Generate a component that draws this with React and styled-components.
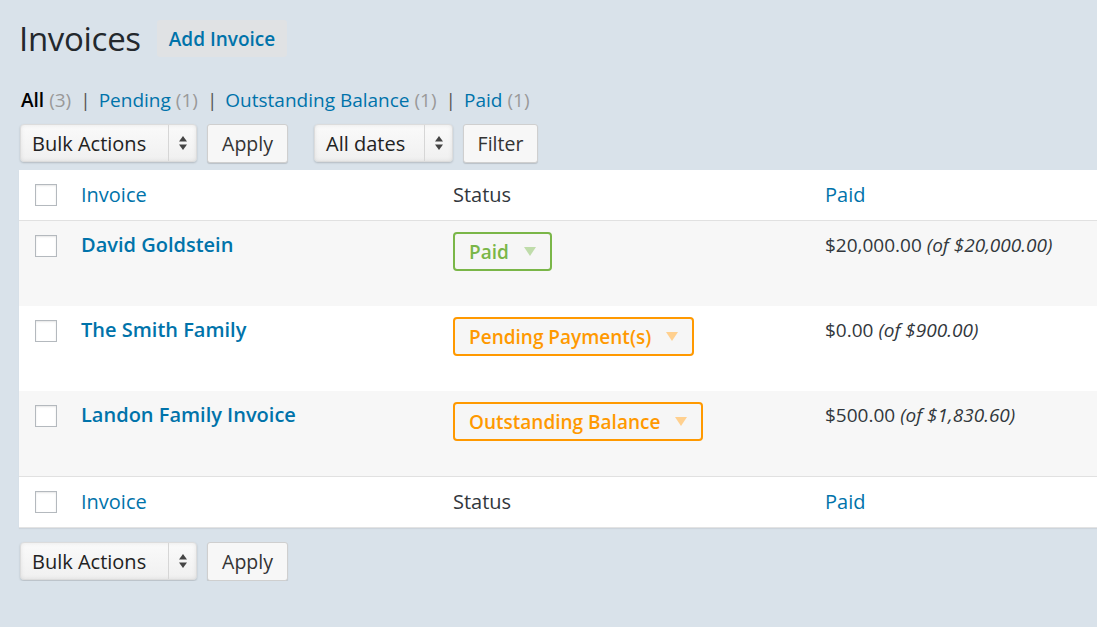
import React from "react";
import styled, { createGlobalStyle } from "styled-components";

const Global = createGlobalStyle`
  html, body { margin: 0; padding: 0; }
  body {
    background: #d9e2ea;
    font-family: "Open Sans", "Noto Sans", sans-serif;
    color: #32373c;
    overflow: hidden;
  }
`;

const Wrap = styled.div`
  padding: 20px 0 0 19px;
  width: 1097px;
  box-sizing: border-box;
`;

const TitleRow = styled.div`
  display: flex;
  align-items: center;
  gap: 16px;
  height: 37px;
`;

const Title = styled.h1`
  margin: 0;
  font-size: 33px;
  font-weight: 400;
  color: #23282d;
  line-height: 37px;
  letter-spacing: -0.3px;
`;

const AddButton = styled.a`
  display: inline-flex;
  align-items: center;
  justify-content: center;
  height: 37px;
  padding: 0 12px;
  background: #e0e2e4;
  color: #0073aa;
  font-size: 19px;
  font-weight: 600;
  border-radius: 3px;
  box-sizing: border-box;
  white-space: nowrap;
`;

const Views = styled.ul`
  list-style: none;
  margin: 31px 0 0 2px;
  padding: 0;
  display: flex;
  font-size: 19px;
  line-height: 24px;
  color: #666;
`;

const ViewItem = styled.li`
  display: flex;
  align-items: baseline;
`;

const ViewLink = styled.a`
  color: ${(p) => (p.$current ? "#000" : "#0073aa")};
  font-weight: ${(p) => (p.$current ? 600 : 400)};
`;

const Count = styled.span`
  color: #999;
  margin-left: 5px;
`;

const Sep = styled.span`
  color: #555;
  margin: 0 8px 0 9px;
`;

const Controls = styled.div`
  display: flex;
  align-items: center;
  margin: ${(p) => p.$top || "8px"} 0 0 1px;
  height: 39px;
`;

const Group = styled.div`
  display: flex;
  gap: 10px;
  margin-right: 26px;
`;

const Select = styled.div`
  display: flex;
  align-items: stretch;
  height: 38px;
  width: ${(p) => p.$w}px;
  box-sizing: border-box;
  border: 1px solid #dcdcdc;
  border-radius: 4px;
  background: linear-gradient(#fafafa, #f0f0f0);
  box-shadow: 0 1px 2px rgba(0, 0, 0, 0.18), inset 0 0 4px rgba(0, 0, 0, 0.08);
  font-size: 20px;
  color: #222;
`;

const SelectText = styled.span`
  flex: 1;
  display: flex;
  align-items: center;
  padding-left: 11px;
`;

const SelectArrow = styled.span`
  width: 27px;
  border-left: 1px solid #d6d6d6;
  display: flex;
  align-items: center;
  justify-content: center;
`;

const Button = styled.button`
  height: 39px;
  width: ${(p) => p.$w}px;
  box-sizing: border-box;
  border: 1px solid #cfcfcf;
  border-radius: 3px;
  background: #f7f7f7;
  box-shadow: 0 1px 1px rgba(0, 0, 0, 0.15);
  font-family: inherit;
  font-size: 19.5px;
  color: #333;
  padding: 0;
  cursor: pointer;
`;

const Table = styled.div`
  margin-top: 7px;
  background: #fff;
  box-shadow: 0 1px 1px rgba(0, 0, 0, 0.06);
  border-bottom: 1px solid #e3e3e3;
  width: 1100px;
`;

const Row = styled.div`
  display: grid;
  grid-template-columns: 50px 372px 372px 1fr;
  height: ${(p) => (p.$head ? 50 : 85)}px;
  align-items: ${(p) => (p.$head ? "center" : "start")};
  background: ${(p) => (p.$alt ? "#f7f7f7" : "#fff")};
  border-bottom: ${(p) => (p.$line ? "1px solid #e1e1e1" : "none")};
  border-top: ${(p) => (p.$topline ? "1px solid #e1e1e1" : "none")};
`;

const Cell = styled.div`
  padding: ${(p) => (p.$head ? "0 0 0 12px" : "9px 0 0 12px")};
  font-size: 20px;
  line-height: 30px;
  color: #32373c;
`;

const CheckCell = styled.div`
  padding: ${(p) => (p.$head ? "0 0 0 16px" : "14px 0 0 16px")};
  display: flex;
`;

const Checkbox = styled.span`
  width: 22px;
  height: 22px;
  box-sizing: border-box;
  border: 1px solid #b4b9be;
  background: #fff;
  box-shadow: inset 0 1px 2px rgba(0, 0, 0, 0.1);
`;

const HeadLink = styled.a`
  color: #0073aa;
`;

const NameLink = styled.a`
  color: #0073aa;
  font-weight: 600;
`;

const StatusCell = styled.div`
  padding: 11px 0 0 12px;
`;

const Badge = styled.span`
  display: inline-flex;
  align-items: center;
  gap: 15px;
  height: 39px;
  box-sizing: border-box;
  padding: 0 14px;
  border: 2px solid ${(p) => p.$c};
  border-radius: 4px;
  background: #f6f6f6;
  color: ${(p) => p.$c};
  font-size: 19px;
  font-weight: 600;
`;

const Of = styled.em`
  font-style: italic;
`;

const Amount = styled.div`
  padding: 9px 0 0 12px;
  font-size: 19px;
  line-height: 30px;
  color: #32373c;
`;

const Updown = () => (
  <svg width="10" height="16" viewBox="0 0 10 16">
    <path d="M1 6.5 L5 1 L9 6.5 Z" fill="#444" />
    <path d="M1 9.5 L5 15 L9 9.5 Z" fill="#444" />
  </svg>
);

const Tri = ({ c }) => (
  <svg width="12" height="9" viewBox="0 0 12 9">
    <path d="M0 0 H12 L6 9 Z" fill={c} />
  </svg>
);

const BulkBar = ({ top, withFilter }) => (
  <Controls $top={top}>
    <Group>
      <Select $w={177}>
        <SelectText>Bulk Actions</SelectText>
        <SelectArrow>
          <Updown />
        </SelectArrow>
      </Select>
      <Button $w={81}>Apply</Button>
    </Group>
    {withFilter && (
      <Group>
        <Select $w={139}>
          <SelectText>All dates</SelectText>
          <SelectArrow>
            <Updown />
          </SelectArrow>
        </Select>
        <Button $w={75}>Filter</Button>
      </Group>
    )}
  </Controls>
);

const rows = [
  { name: "David Goldstein", status: "Paid", color: "#7ab648", tri: "#bfdcaa", paid: "$20,000.00", of: "(of $20,000.00)" },
  { name: "The Smith Family", status: "Pending Payment(s)", color: "#ff9900", tri: "#ffd08f", paid: "$0.00", of: "(of $900.00)" },
  { name: "Landon Family Invoice", status: "Outstanding Balance", color: "#ff9900", tri: "#ffd08f", paid: "$500.00", of: "(of $1,830.60)" },
];

const HeaderRow = ({ bottom }) => (
  <Row $head $line={!bottom} $topline={bottom}>
    <CheckCell $head>
      <Checkbox />
    </CheckCell>
    <Cell $head>
      <HeadLink>Invoice</HeadLink>
    </Cell>
    <Cell $head>Status</Cell>
    <Cell $head>
      <HeadLink>Paid</HeadLink>
    </Cell>
  </Row>
);

export default function App() {
  return (
    <Wrap>
      <Global />
      <TitleRow>
        <Title>Invoices</Title>
        <AddButton>Add Invoice</AddButton>
      </TitleRow>
      <Views>
        <ViewItem>
          <ViewLink $current>All</ViewLink>
          <Count>(3)</Count>
          <Sep>|</Sep>
        </ViewItem>
        <ViewItem>
          <ViewLink>Pending</ViewLink>
          <Count>(1)</Count>
          <Sep>|</Sep>
        </ViewItem>
        <ViewItem>
          <ViewLink>Outstanding Balance</ViewLink>
          <Count>(1)</Count>
          <Sep>|</Sep>
        </ViewItem>
        <ViewItem>
          <ViewLink>Paid</ViewLink>
          <Count>(1)</Count>
        </ViewItem>
      </Views>
      <BulkBar top="12px" withFilter />
      <Table>
        <HeaderRow />
        {rows.map((r, i) => (
          <Row key={r.name} $alt={i % 2 === 0}>
            <CheckCell>
              <Checkbox />
            </CheckCell>
            <Cell>
              <NameLink>{r.name}</NameLink>
            </Cell>
            <StatusCell>
              <Badge $c={r.color}>
                {r.status}
                <Tri c={r.tri} />
              </Badge>
            </StatusCell>
            <Amount>
              {r.paid} <Of>{r.of}</Of>
            </Amount>
          </Row>
        ))}
        <HeaderRow bottom />
      </Table>
      <BulkBar top="14px" />
    </Wrap>
  );
}
